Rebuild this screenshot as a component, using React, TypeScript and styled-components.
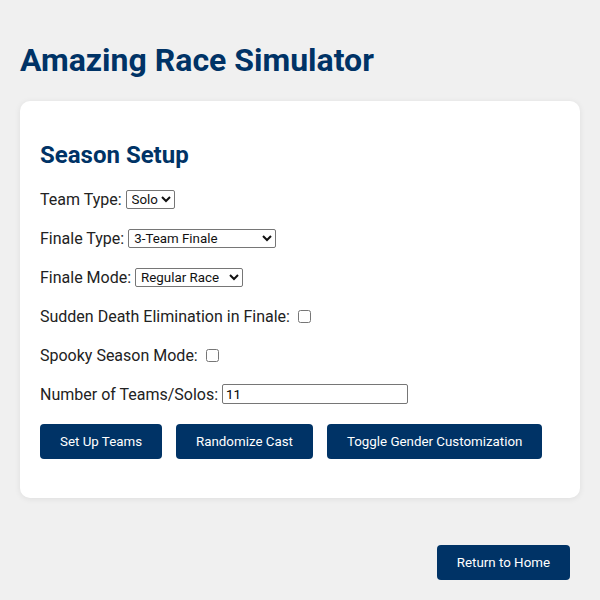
import React from "react";
import styled, { createGlobalStyle } from "styled-components";

const GlobalStyle = createGlobalStyle`
  html, body { margin: 0; padding: 0; background: #f0f0f0; }
  body { font-family: Roboto, "Liberation Sans", Arial, sans-serif; color: #222; }
`;

const Page = styled.div`
  padding: 0 20px 20px 20px;
  display: flex;
  flex-direction: column;
`;

const Title = styled.h1`
  margin: 41px 0 22px 0;
  font-size: 32px;
  line-height: 38px;
  font-weight: 700;
  color: #003366;
`;

const Card = styled.section`
  background: #fff;
  border-radius: 10px;
  box-shadow: 0 1px 6px rgba(0, 0, 0, 0.08);
  padding: 20px 20px 39px 20px;
  display: flex;
  flex-direction: column;
`;

const Heading = styled.h2`
  margin: 20px 0 18px 0;
  font-size: 24px;
  line-height: 28px;
  font-weight: 700;
  color: #003366;
`;

const Rows = styled.div`
  display: flex;
  flex-direction: column;
  gap: 15px;
`;

const Row = styled.label`
  display: flex;
  align-items: center;
  height: 24px;
  font-size: 16px;
  color: #222;
  white-space: pre;
`;

const Select = styled.select<{ $w: number }>`
  width: ${(p) => p.$w}px;
  height: 19px;
  margin: 0 0 0 4px;
  font-family: Roboto, "Liberation Sans", Arial, sans-serif;
  font-size: 13.333px;
  color: #111;
  padding: 0 0 0 1px;
  border: 1px solid #767676;
  border-radius: 2px;
  background: #fff;
`;

const Check = styled.input`
  width: 13px;
  height: 13px;
  margin: 0 0 0 8px;
`;

const NumberInput = styled.input`
  width: 186px;
  height: 20px;
  box-sizing: border-box;
  margin: 0 0 0 4px;
  padding: 1px 3px;
  font-family: Roboto, "Liberation Sans", Arial, sans-serif;
  font-size: 13.333px;
  border: 1px solid #767676;
  border-radius: 2px;
`;

const ButtonRow = styled.div`
  display: flex;
  gap: 14px;
  margin-top: 18px;
`;

const Button = styled.button`
  flex: none;
  height: 35px;
  padding: 0 20px;
  background: #003366;
  color: #fff;
  border: none;
  border-radius: 4px;
  font-family: Roboto, "Liberation Sans", Arial, sans-serif;
  font-size: 13.333px;
  white-space: nowrap;
  cursor: pointer;
`;

const Footer = styled.div`
  display: flex;
  justify-content: flex-end;
  padding: 47px 10px 0 0;
`;

export default function App() {
  return (
    <>
      <GlobalStyle />
      <Page>
        <Title>Amazing Race Simulator</Title>
        <Card>
          <Heading>Season Setup</Heading>
          <Rows>
            <Row>
              Team Type:
              <Select $w={49} defaultValue="solo">
                <option value="solo">Solo</option>
                <option value="duo">Duo</option>
              </Select>
            </Row>
            <Row>
              Finale Type:
              <Select $w={148} defaultValue="3">
                <option value="3">3-Team Finale</option>
                <option value="2">2-Team Finale</option>
              </Select>
            </Row>
            <Row>
              Finale Mode:
              <Select $w={108} defaultValue="regular">
                <option value="regular">Regular Race</option>
              </Select>
            </Row>
            <Row>
              Sudden Death Elimination in Finale:
              <Check type="checkbox" />
            </Row>
            <Row>
              Spooky Season Mode:
              <Check type="checkbox" />
            </Row>
            <Row>
              Number of Teams/Solos:
              <NumberInput type="text" defaultValue="11" />
            </Row>
          </Rows>
          <ButtonRow>
            <Button>Set Up Teams</Button>
            <Button>Randomize Cast</Button>
            <Button>Toggle Gender Customization</Button>
          </ButtonRow>
        </Card>
        <Footer>
          <Button>Return to Home</Button>
        </Footer>
      </Page>
    </>
  );
}
